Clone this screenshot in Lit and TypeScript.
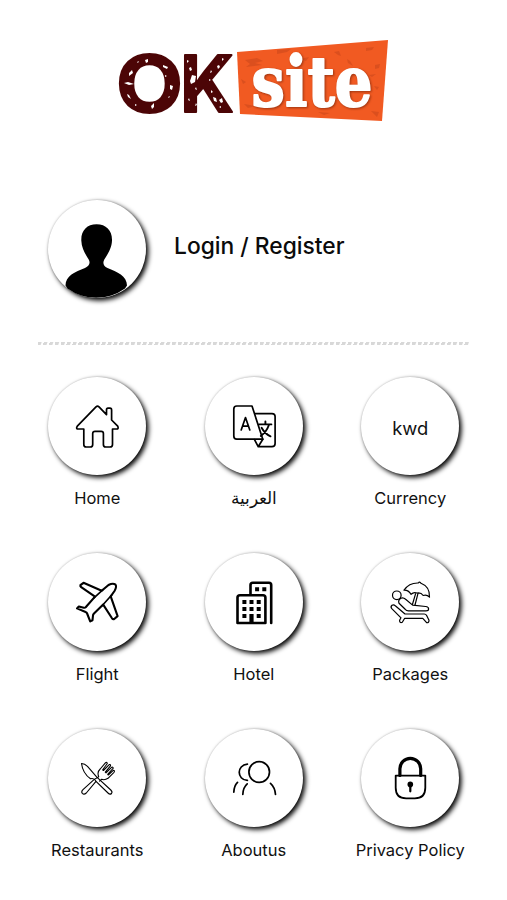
import { LitElement, html, svg, css } from "lit";
import { customElement, property } from "lit/decorators.js";

const icons: Record<string, unknown> = {
  home: svg`<g stroke-width="1.7"><path d="M-1-19.2Q.5-20.6 2-19.2L9.5-11.3V-16Q9.5-17.8 11-17.8H13Q14.6-17.8 14.6-16V-6L20.7.2Q22 3 19.5 3H15.5V18.5Q15.5 21 13 21H8.7Q6.4 21 6.4 18.5V7.5Q6.4 5.4 4.2 5.4H-2Q-4.3 5.4-4.3 7.5V18.5Q-4.3 21-6.7 21H-10.8Q-13.2 21-13.2 18.5V3H-18.5Q-21.5 3-19.7.2Z"/></g>`,
  language: svg`<g stroke-width="1.7"><path d="M-2-20H-17.2Q-20.2-20-20.2-17V10Q-20.2 13.2-17.2 13.2H8.8Z"/><path d="M.8-12.4H18Q21.1-12.4 21.1-9.4V17.6Q21.1 20.7 18 20.7H4.2L.5 13.6M4.2 20.7L8.8 13.2"/><path d="M-12.8 4L-8.5-8.5L-4.2 4M-11.5.2H-5.5"/><path stroke-width="1.9" d="M5-1.6H17.4M11.4-4.6V-1.6M15-1.2Q12.5 6 6.8 10M7.6 1.8Q11 8 16.5 10.3"/></g>`,
  flight: svg`<g stroke-width="2.1"><path d="M4.7-11.2L-13.5-19.2L-16.6-16.8Q-17-15.8-15.8-14.8L-2-5.4L-11.3 5.3Q-12 6-13.2 5.7L-18.2 4.5L-20 6.4L-11.4 10Q-10 10.5-9.7 12L-6.8 19.4L-4.5 18.2L-4 13.5Q-4 12.6-3 11.6L6.2 2.6L15 16.3Q16 17.6 17.2 17L20.6 14.1L13.7-5.7L17.5-11Q20-15.5 18.5-17.4Q16-19.3 11.5-17Z"/><path d="M6-12.4L-3-4.2M14.7-7L5.3 3.5" stroke-width="1.7"/></g>`,
  hotel: svg`<g stroke-width="2.6"><path d="M-16.5 21V-4.5Q-16.5-6.8-14-6.8H9Q11.4-6.8 11.4-4.5V21ZM-3.5-7V-17Q-3.5-19.2-1.2-19.2H15Q17.2-19.2 17.2-17V21"/></g><g fill="currentColor" stroke="none"><path d="M-11.6-2h4v4h-4zM-4.5-2h4v4h-4zM2.7-2h4v4h-4zM-11.6 5h4v4h-4zM-4.5 5h4v4h-4zM2.7 5h4v4h-4zM-11.6 12h4v4h-4zM2.7 12h4v4h-4zM-4.6 12h4.2v9h-4.2zM1.1-14.8h4v4h-4zM8.3-14.8h4v4h-4z"/></g>`,
  packages: svg`<g stroke-width="1.2"><circle cx="-13.2" cy="-6.7" r="4.3"/><path d="M-6-11.8Q-1-19.3 8.3-19Q9.6-20.8 11-18.7Q20-15.3 19.5-4.8Q16.7-7.8 13.2-6.5Q11-9.8 7-9Q3.8-10.4 1-7.7Q-1.5-12-6-11.8ZM5.7-8.7L2.4 2.5M8-8.7L5 3"/><path d="M-9.2-3.7Q-6.8-5-4.4-2.7L2.6 3.1L15.6 4.5Q18.6 4.8 18.6 7Q18.6 8.9 16 8.9H-1.5Q-3.5 8.8-4.8 7.3L-11 1.3Q-12.2-1.8-9.2-3.7Z"/><path d="M-18 3.2Q-16.3 2.2-14.7 3.7L-5 12H14.2Q15.8 12 16.5 13.3L19 18.3Q19 21 16.6 20.7L12.8 16.3H-5.3L-7.7 20.3Q-10.4 21.5-10.4 18.2L-9 15.8L-18.2 6.6Q-19.8 4.8-18 3.2Z"/></g>`,
  restaurants: svg`<g stroke-width="1.1"><path d="M-15.5-14.5Q-12.5-14.6-9.5-11.7L-.2-.8L13.8 12Q15.8 14 14.5 15.5Q13 17 11 15L-1 3.3Q-3-.3-6.5.8Q-14.2-4.6-15.5-14.5Z"/><path d="M-1 3.4L-10.7 15Q-13 17-14.6 15.4Q-16.1 13.7-14 11.7L-3 1.6L1.7-1.3Q-.2-6 3.2-9L8.6-15.3Q10.1-16.2 10.3-14.5L5.7-8.2L6.4-7.5L12.2-13.4Q13.8-13.8 13.5-12.2L8.3-5.8L9-5.2L14.8-10.8Q16.4-11.2 16.1-9.6L10.7-3.6L11.3-3L16.3-7.6Q18.2-7.6 17-5.7L11 .3Q7.8 2.4 4.7 1.3L2.5 3.1"/></g>`,
  about: svg`<g stroke-width="1.7"><circle cx="5.2" cy="-6" r="10.3"/><path d="M-6.6-13.9C-17.5-13-17.5 1.8-6.6 2.4M-16.5 4.4Q-20 8-20.2 14.2M-6.8 5.8Q-11 9.5-11.2 16.5M16.5 5.4Q21 9.5 21.5 16.5"/></g>`,
  privacy: svg`<path stroke-width="3.2" d="M-10.1-2.5V-9.2A10.4 10.4 0 0 1 10.7-9.2V-2.5"/><path stroke-width="1.8" d="M-14.3-2.4H15.3V9.8Q15.3 20.4 4.8 20.4H-3.8Q-14.3 20.4-14.3 9.8Z"/><circle cx=".3" cy="6.4" r="2.8" fill="currentColor" stroke="none"/><path stroke-width="2.2" d="M.3 6.5V13.3"/>`,
  avatar: svg`<path fill="currentColor" stroke="none" d="M-.4-24.7C-10-24.7-16-18.5-15.7-8.5C-15.5-.5-11 6-8.3 10.5C-6.5 14-7.5 17-12 19C-22 22.8-31.5 27-31.5 36.5L-29.5 39.5A49 49 0 0 0 28 39.5L30 36.5C30 27 20 22.8 10.5 19C6.3 17 5.5 14 7.3 10.5C10 6 14.8-.5 15-8.5C15.3-18.5 9.2-24.7-.4-24.7Z"/>`,
};

@customElement("round-badge")
class RoundBadge extends LitElement {
  @property() icon = "";
  @property() text = "";
  static styles = css`
    :host { display: block; }
    .disc {
      width: 98px; height: 98px; border-radius: 50%; background: #fff;
      box-shadow: 2.500px 2.500px 5px #000, 0 0 2px rgba(0, 0, 0, 0.2);
      display: flex; align-items: center; justify-content: center;
      font: 400 18.400px Inter, sans-serif; color: #111;
    }
    .disc span { padding-top: 4px; }
    svg { width: 98px; height: 98px; display: block; fill: none; stroke: currentColor; stroke-linejoin: round; stroke-linecap: round; color: #000; }
  `;
  render() {
    return html`<div class="disc">${this.text
      ? html`<span>${this.text}</span>`
      : html`<svg viewBox="-49 -49 98 98">${icons[this.icon]}</svg>`}</div>`;
  }
}

@customElement("site-logo")
class SiteLogo extends LitElement {
  static styles = css`
    :host { display: block; }
    svg { display: block; width: 272px; height: 84px; overflow: visible; }
    .ok { font: 700 78px Inter, sans-serif; fill: #4c0506; stroke: #4c0506; stroke-width: 2; stroke-linejoin: round; }
    .site { font: 700 70px "DejaVu Serif", serif; fill: #fff; stroke: #fff; stroke-width: 2; stroke-linejoin: round; filter: drop-shadow(1.5px 1.5px 0.8px #9c3410); }
  `;
  render() {
    return html`<svg viewBox="118 38 272 84">
      <text class="ok" x="116" y="112" textLength="67" lengthAdjust="spacingAndGlyphs">O</text>
      <text class="ok" x="180" y="112" textLength="54" lengthAdjust="spacingAndGlyphs">K</text>
      <g fill="#fff">
        <path d="M129 73l3-3 1 3-4 3zM163 65l5 2-1 2-4-2zM145 60l3-1v3l-2 1zM170 85l3 1-1 4-2-1zM151 106l3-3v4l-2 2zM127 94l2 1 2 4-3-2zM137 62l2-1-1 2zM124 83l4-1 6 2-5 1zM168 97l2-1-1 2zM165 75l2 1-2 1zM135 104l2 1-2 1z"/>
        <path d="M189 68l2-1 1 3-2 1zM192 75l4 1-1 6-4 2-1-3zM187 60l2 1-2 2zM196 87l1 3-2-1zM189 98l1 3-2-1zM195 106l1-3 1 2zM217 66l2-1 1 2-2 2zM222 58l2 1-2 2zM209 79l2 1-2 1zM213 97l3 1 1 4-3-1zM219 100l3-2 1 4-2 1zM211 90l2 2-2 1zM219 107l2-1v2zM211 70l1 2-2 1z"/>
      </g>
      <path fill="#f15a22" d="M237 52L388 40L382 121L240 114Z"/>
      <g fill="#c9471b" opacity=".55">
        <path d="M245 60l12-2 6 3-8 2 7 2-16 2 4-3zM277 50l14-1-4 3-10 2zM334 52l5-1 2 5-3-1zM366 48l8-1-2 3-6 1zM347 59l3 2 3 5-5-3zM375 65l5-1-1 4-4 1zM241 79l5 3-3 2zM374 86l5 1-2 3zM244 104l12 2-8 2zM318 112l12 1-6 2zM371 111l8 1-2 5zM369 75l7-1-4 3zM300 59l9-2-3 4z"/>
      </g>
      <text class="site" x="251.500" y="105.500" textLength="121" lengthAdjust="spacingAndGlyphs">site</text>
    </svg>`;
  }
}

@customElement("app-root")
class AppRoot extends LitElement {
  static styles = css`
    :host { display: block; width: 507px; height: 900px; background: #fff; overflow: hidden; font-family: Inter, "Noto Sans", sans-serif; color: #111; }
    site-logo { margin: 0 0 0 118px; padding-top: 38px; }
    .login { display: flex; align-items: center; margin: 76px 0 0 48px; height: 101px; gap: 28px; }
    .login span { font-size: 22.800px; font-weight: 500; line-height: 28px; padding-bottom: 6px; color: #0b0b0b; white-space: nowrap; }
    .rule { margin: 43px 37px 0 38px; height: 3px; background: repeating-linear-gradient(110deg, #d8d8d8 0 3px, #fff 4px 5.500px); }
    .grid { display: grid; grid-template-columns: repeat(3, 156.500px); grid-auto-rows: 176px; margin: 32px 0 0 19px; }
    .item { display: flex; flex-direction: column; align-items: center; }
    .label { font-size: 16.500px; line-height: 20px; margin-top: 13px; white-space: nowrap; }
  `;
  private items = [
    ["home", "Home"], ["language", "العربية"], ["", "Currency", "kwd"],
    ["flight", "Flight"], ["hotel", "Hotel"], ["packages", "Packages"],
    ["restaurants", "Restaurants"], ["about", "Aboutus"], ["privacy", "Privacy Policy"],
  ];
  render() {
    return html`
      <site-logo></site-logo>
      <div class="login"><round-badge icon="avatar"></round-badge><span>Login / Register</span></div>
      <div class="rule"></div>
      <div class="grid">
        ${this.items.map(([icon, label, text]) => html`
          <div class="item">
            <round-badge .icon=${icon} .text=${text ?? ""}></round-badge>
            <div class="label">${label}</div>
          </div>`)}
      </div>`;
  }
}
